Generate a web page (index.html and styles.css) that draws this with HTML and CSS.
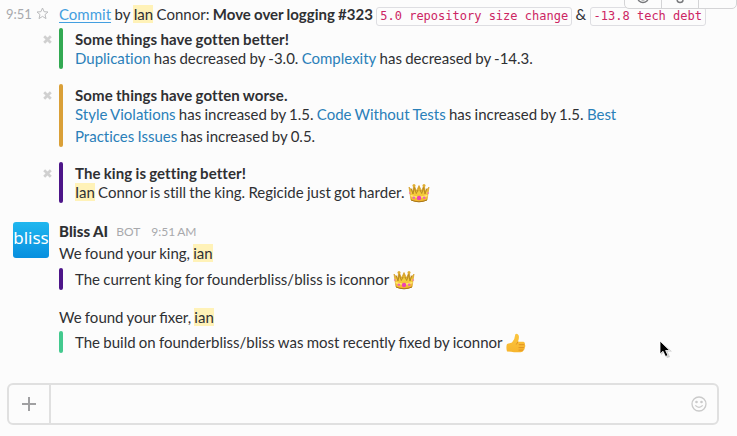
FILE: index.html
```html
<!DOCTYPE html>
<html lang="en">
<head>
<meta charset="utf-8">
<title>Bliss AI</title>
<link rel="stylesheet" href="styles.css">
</head>
<body>
<svg class="defs" width="0" height="0" aria-hidden="true">
  <defs>
    <linearGradient id="gold" x1="0" y1="0" x2="0" y2="1"><stop offset="0" stop-color="#c78a16"/><stop offset=".45" stop-color="#f5cf3c"/><stop offset="1" stop-color="#f3b52b"/></linearGradient>
    <linearGradient id="thumb" x1="0" y1="0" x2="0" y2="1"><stop offset="0" stop-color="#fbc640"/><stop offset="1" stop-color="#f7b52d"/></linearGradient>
    <symbol id="cross" viewBox="0 0 9 9"><path d="M1.2 1.2L7.8 7.8M7.8 1.2L1.2 7.8" stroke="#d0d0d0" stroke-width="2.7"/></symbol>
    <symbol id="crown" viewBox="0 0 22 20">
      <path d="M1 4L4.5 8.5L6 2L8.5 8L11 2.5L13.5 8L16 2L17.5 8.5L21 4L19 17Q11 20.5 3 17Z" fill="url(#gold)" stroke="#d79d25" stroke-width=".7"/>
      <path d="M3.2 5.5L5 11L6.3 4.5L8.3 10.5L10 7M12 7L13.7 10.5L15.7 4.5L17 11L18.8 5.5" fill="none" stroke="#b98a24" stroke-width="1"/>
      <circle cx="6" cy="2.5" r="1.5" fill="#e0ae33"/><circle cx="16" cy="2.5" r="1.5" fill="#e0ae33"/>
      <path d="M2.5 12.5Q11 16 19.5 12.5" fill="none" stroke="#ffe86d" stroke-width="1.5"/>
      <path d="M3 17Q11 20.5 19 17" fill="none" stroke="#aa771a"/>
      <circle cx="11" cy="15" r="2.2" fill="#ec43b1"/><circle cx="5.8" cy="14.7" r="1.3" fill="#ee65b5"/><circle cx="16.2" cy="14.7" r="1.3" fill="#ee65b5"/><circle cx="1.8" cy="10" r=".9" fill="#ee83b5"/><circle cx="20.2" cy="10" r=".9" fill="#ee83b5"/>
    </symbol>
  </defs>
</svg>
<main class="chat">
  <div class="actions">
    <span class="action"><svg width="14" height="14" viewBox="0 0 14 14"><circle cx="7" cy="7" r="5.5"/><path d="M4.3 8.5Q7 11.3 9.7 8.5"/></svg></span>
    <span class="action"><svg width="14" height="14" viewBox="0 0 14 14"><path d="M4 4V9Q4 12.5 7 12.5Q10 12.5 10 10"/></svg></span>
    <span class="action last"></span>
  </div>
  <article class="message">
    <div class="gutter">
      <time>9:51</time>
      <svg class="star" width="13" height="13" viewBox="0 0 13 13"><path d="M6.5 1L8.1 4.7L12 5L9 7.6L10 11.6L6.5 9.4L3 11.6L4 7.6L1 5L4.9 4.7Z"/></svg>
    </div>
    <div class="body">
      <p class="headline"><a class="commit" href="#">Commit</a> by <mark>Ian</mark> Connor: <b>Move over logging #323</b> <code>5.0 repository size change</code> &amp; <code>-13.8 tech debt</code></p>
      <section class="attachment green">
        <svg class="remove" width="9" height="9"><use href="#cross"/></svg>
        <h2>Some things have gotten better!</h2>
        <p><a href="#">Duplication</a> has decreased by -3.0. <a href="#">Complexity</a> has decreased by -14.3.</p>
      </section>
      <section class="attachment amber">
        <svg class="remove" width="9" height="9"><use href="#cross"/></svg>
        <h2>Some things have gotten worse.</h2>
        <p><a href="#">Style Violations</a> has increased by 1.5. <a href="#">Code Without Tests</a> has increased by 1.5. <a href="#">Best Practices Issues</a> has increased by 0.5.</p>
      </section>
      <section class="attachment purple">
        <svg class="remove" width="9" height="9"><use href="#cross"/></svg>
        <h2>The king is getting better!</h2>
        <p><mark>Ian</mark> Connor is still the king. Regicide just got harder. <svg class="emoji" width="22" height="20"><use href="#crown"/></svg></p>
      </section>
    </div>
  </article>
  <article class="message bot">
    <div class="gutter"><div class="avatar">bliss</div></div>
    <div class="body">
      <header><b class="name">Bliss AI</b><span class="tag">BOT</span><time>9:51 AM</time></header>
      <p>We found your king, <mark>ian</mark></p>
      <section class="attachment purple">
        <p>The current king for founderbliss/bliss is iconnor <svg class="emoji" width="22" height="20"><use href="#crown"/></svg></p>
      </section>
      <p class="second">We found your fixer, <mark>ian</mark></p>
      <section class="attachment mint">
        <p>The build on founderbliss/bliss was most recently fixed by iconnor <svg class="emoji" width="20" height="20" viewBox="0 0 20 20"><path d="M1 11L6 9.5Q9 6 9.3 1.2Q11.5-.2 12.7 2.5Q13.4 5 12 8.7L17.5 8.8Q19.5 9.5 18.7 11.5Q20 13 18.6 14.5Q19 16.4 17.5 17.2Q17 19.3 14.5 19.3H8Q5 18.5 1 18.6Q-.2 14 1 11Z" fill="url(#thumb)"/><path d="M18.5 11.7H12.8M18.3 14.6H12.6M17.4 17.1H12.6M12 8.7L10.3 11.5" fill="none" stroke="#df8d20" stroke-width=".9"/></svg></p>
      </section>
    </div>
  </article>
  <div class="composer">
    <button class="plus" aria-label="Attach"><svg width="14" height="14" viewBox="0 0 14 14"><path d="M7 0V14M0 7H14"/></svg></button>
    <div class="field"></div>
    <svg class="smile" width="16" height="16" viewBox="0 0 16 16"><circle cx="8" cy="8" r="7"/><path d="M4.3 9.4Q8 13.3 11.7 9.4"/><circle class="eye" cx="5.5" cy="6" r="1.3"/><circle class="eye" cx="10.5" cy="6" r="1.3"/></svg>
  </div>
  <svg class="cursor" width="14" height="19" viewBox="0 0 14 19"><path class="shade" d="M2 2V15L5 12L8 18L11 17L8.5 11.5H13Z"/><path d="M1 1V14L4 11.2L6.5 16.5L9 15.4L6.6 10.5H10.7Z"/></svg>
</main>
</body>
</html>
```
FILE: styles.css
```css
* { box-sizing: border-box; }
body {
  margin: 0;
  background: #fcfcfc;
  color: #2f3033;
  font: 15px/22px Lato, "Liberation Sans", sans-serif;
  word-spacing: -.58px;
}
p, h2 { margin: 0; }
.defs { position: absolute; }
.chat {
  position: relative;
  height: 436px;
  padding-top: 3px;
  overflow: hidden;
  display: flex;
  flex-direction: column;
}
.message { display: grid; grid-template-columns: 59px 1fr; }
.gutter { display: flex; align-items: flex-start; }
time, .tag { color: #a8a9ac; font-size: 12px; }
.gutter time { width: 30px; margin-left: 6px; font-size: 13px; }
.star { margin-top: 4px; fill: none; stroke: #bbbcbe; stroke-width: 1; }
.headline { height: 22px; margin-bottom: 3px; white-space: nowrap; word-spacing: -.45px; }
a { color: #2a80b9; text-decoration: none; }
.removable p, .purple p, a { font-variant-ligatures: none; }
.commit { color: #439fe0; text-decoration: underline; text-underline-offset: 2px; text-decoration-thickness: 1px; text-decoration-skip-ink: none; }
mark { color: inherit; background: #fff2b8; }
b, h2 { font-weight: 700; font-variant-ligatures: none; }
code {
  display: inline-block;
  height: 19px;
  padding: 0 3px;
  border: 1px solid #dedee2;
  border-radius: 3px;
  color: #cc2563;
  font: 12px/17px "DejaVu Sans Mono", monospace;
  word-spacing: 0;
}
.attachment {
  position: relative;
  width: 580px;
  padding-left: 16px;
  margin-bottom: 15px;
}
.attachment::before {
  content: "";
  position: absolute;
  inset: 0 auto 0 0;
  width: 4px;
  border-radius: 2px;
  background: var(--bar);
}
.green { --bar: #32a952; }
.amber { --bar: #daa038; }
.purple { --bar: #4d1689; }
.mint { --bar: #43c98e; }
.attachment h2 { height: 19px; font-size: 15px; line-height: 22px; letter-spacing: .09px; }
.remove { position: absolute; left: -16px; top: 7px; }
.emoji { display: inline-block; vertical-align: middle; margin: -4px 0 -2px .5px; }
.bot { margin-top: 2px; }
.avatar {
  width: 36px;
  height: 36px;
  margin: 2px 0 0 13px;
  border-radius: 3px;
  background: linear-gradient(#20b7ef, #078fdf);
  color: #fff;
  font: 17px/32px "Noto Sans", sans-serif;
  display: flex;
  justify-content: center;
}
.bot header { display: flex; height: 22px; }
.name { font-weight: 900; letter-spacing: .1px; }
.tag { margin: 1px 11px 0 8px; }
.bot header time { margin-top: 1px; }
.bot .attachment { margin-top: 4px; margin-bottom: 16px; }
.bot .second + .attachment { margin-top: 3px; margin-bottom: 0; }
.composer {
  display: flex;
  align-items: center;
  width: 712px;
  height: 42px;
  margin: auto 0 11px 7px;
  border: 2px solid #e0e0e0;
  border-radius: 6px;
}
.plus {
  display: grid;
  place-items: center;
  width: 42px;
  height: 38px;
  padding: 0;
  border: 0;
  border-right: 2px solid #e0e0e0;
  background: none;
}
.plus path { stroke: #a0a0a2; stroke-width: 2; }
.field { flex: 1; }
.smile { margin-right: 10px; fill: none; stroke: #cacaca; stroke-width: 1.3; }
.smile .eye { fill: #cacaca; stroke: none; }
.actions {
  position: absolute;
  top: -19px;
  left: 624px;
  z-index: 1;
  display: flex;
  width: 113px;
  height: 28px;
  border: 1px solid #d4d4d6;
  border-radius: 5px;
  background: #fcfcfc;
}
.action { display: flex; align-items: flex-end; justify-content: center; width: 37px; border-right: 1px solid #d4d4d6; }
.action.last { border: 0; }
.action svg { margin-bottom: 4px; fill: none; stroke: #77787b; stroke-width: 1.4; }
.cursor { position: absolute; left: 659px; top: 340px; fill: #000; stroke: #fff; stroke-width: .8; }
.cursor .shade { fill: #ccc; stroke: none; }
```
